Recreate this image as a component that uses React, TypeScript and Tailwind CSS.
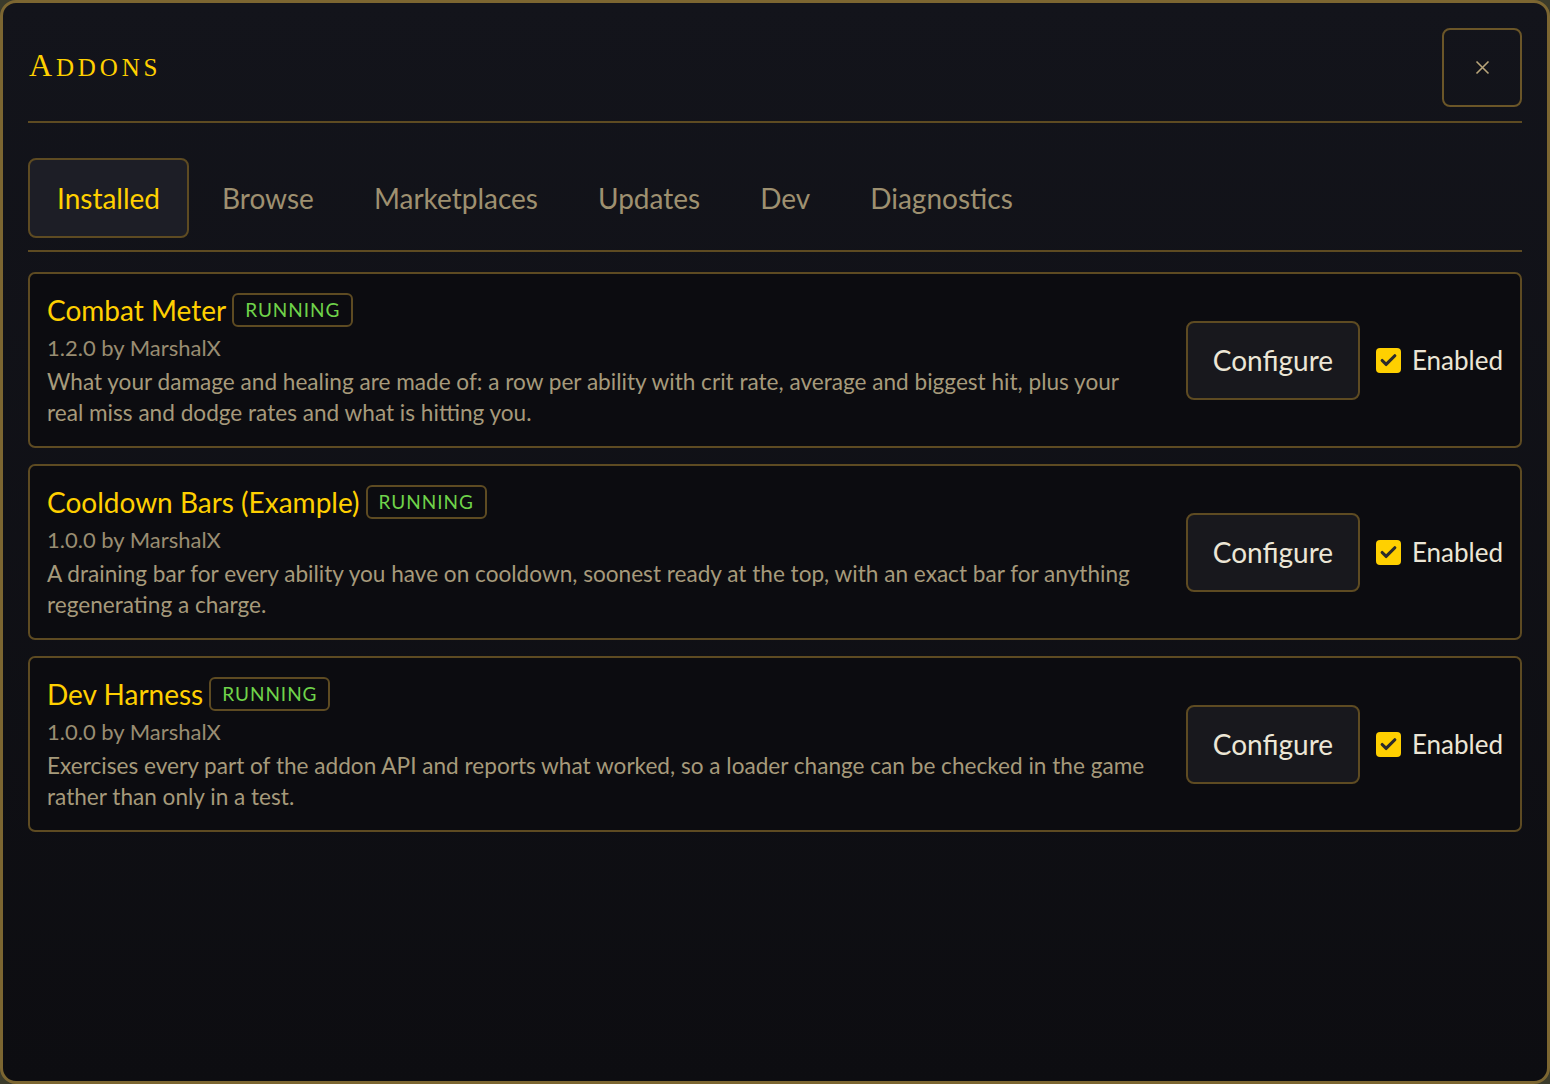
import { Check } from "lucide-react";

type Addon = {
  name: string;
  version: string;
  description: string;
};

const addons: Addon[] = [
  {
    name: "Combat Meter",
    version: "1.2.0 by MarshalX",
    description:
      "What your damage and healing are made of: a row per ability with crit rate, average and biggest hit, plus your real miss and dodge rates and what is hitting you.",
  },
  {
    name: "Cooldown Bars (Example)",
    version: "1.0.0 by MarshalX",
    description:
      "A draining bar for every ability you have on cooldown, soonest ready at the top, with an exact bar for anything regenerating a charge.",
  },
  {
    name: "Dev Harness",
    version: "1.0.0 by MarshalX",
    description:
      "Exercises every part of the addon API and reports what worked, so a loader change can be checked in the game rather than only in a test.",
  },
];

const tabs = ["Installed", "Browse", "Marketplaces", "Updates", "Dev", "Diagnostics"];

function AddonCard({ addon }: { addon: Addon }) {
  return (
    <div className="flex items-center rounded-[7px] border-2 border-[#5e4b22] bg-[#0c0c10] pl-[17px] pr-[17px] pt-[18px] pb-[18px]">
      <div className="min-w-0 flex-1 pr-[30px]">
        <div className="flex h-[36px] items-center gap-[6px]">
          <span className="text-[28px] leading-[36px] text-[#ffd000]">{addon.name}</span>
          <span className="flex h-[34px] items-center rounded-[6px] border-2 border-[#5e4b22] px-[11px] text-[19px] tracking-[0.05em] text-[#6fd34a]">
            RUNNING
          </span>
        </div>
        <div className="mt-[2px] text-[22px] leading-[36px] text-[#998d72]">{addon.version}</div>
        <p className="text-[22.6px] leading-[31px] text-[#a69a7b]">{addon.description}</p>
      </div>
      <div className="flex shrink-0 items-center">
        <button className="flex h-[79px] w-[174px] items-center justify-center rounded-[8px] border-2 border-[#5e4b22] bg-[#18181d] text-[28px] text-[#ece6d6]">
          Configure
        </button>
        <label className="ml-[16px] flex items-center gap-[11px]">
          <span className="flex h-[25px] w-[25px] items-center justify-center rounded-[4px] bg-[#ffd000]">
            <Check size={19} strokeWidth={4} color="#2b2b2b" />
          </span>
          <span className="text-[26px] text-[#ece6d6]">Enabled</span>
        </label>
      </div>
    </div>
  );
}

export default function App() {
  return (
    <div className="h-[1084px] w-[1550px] bg-[#3b3b2b]" style={{ fontFamily: "Lato, 'Open Sans', sans-serif" }}>
      <div className="flex h-full flex-col rounded-[16px] border-[3px] border-[#7c6631] bg-gradient-to-b from-[#13141b] to-[#0d0d11] px-[25px] pt-[25px]">
        <div className="flex items-center justify-between border-b-2 border-[#5e4b22] pb-[14px]">
          <h1
            className="pb-[6px] pl-[1px] text-[32px] tracking-[0.12em] text-[#ffd000]"
            style={{ fontFamily: "'Liberation Serif', serif" }}
          >
            A<span className="text-[25px]">DDONS</span>
          </h1>
          <button className="flex h-[79px] w-[80px] items-center justify-center rounded-[8px] border-2 border-[#6b5628] text-[#b8a57a]">
            <svg width="15" height="15" viewBox="0 0 15 15" fill="none" stroke="#b8a57a" strokeWidth="1.6">
              <path d="M1.5 1.5 L13.5 13.5 M13.5 1.5 L1.5 13.5" />
            </svg>
          </button>
        </div>

        <div className="mt-[35px] flex items-center gap-[6px] border-b-2 border-[#5e4b22] pb-[12px]">
          {tabs.map((t, i) =>
            i === 0 ? (
              <div
                key={t}
                className="flex h-[80px] items-center rounded-[8px] border-2 border-[#5e4b22] bg-[#1d1e26] px-[27px] text-[28px] text-[#ffd000]"
              >
                {t}
              </div>
            ) : (
              <div key={t} className="flex h-[80px] items-center px-[27px] text-[28px] text-[#9e9070]">
                {t}
              </div>
            )
          )}
        </div>

        <div className="mt-[20px] flex flex-col gap-[16px]">
          {addons.map((a) => (
            <AddonCard key={a.name} addon={a} />
          ))}
        </div>
      </div>
    </div>
  );
}
